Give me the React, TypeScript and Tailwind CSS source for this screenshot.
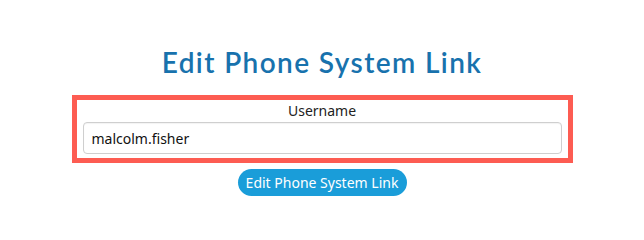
export default function App() {
  return (
    <div className="flex min-h-[219px] w-[644px] flex-col items-center bg-white font-['Noto_Sans',sans-serif]">
      {/* Title */}
      <h1 className="mt-[46px] h-[32px] font-['Lato',sans-serif] text-[28px] font-semibold leading-[32px] tracking-[1.4px] text-[#1872ad]">
        Edit Phone System Link
      </h1>

      {/* Highlighted field */}
      <div className="mt-[17px] w-[501px] border-[5px] border-[#fd5c52] px-[6px] pb-[4px]">
        <div className="h-[22px] text-center text-[14px] leading-[22px] text-[#222]">Username</div>
        <input
          type="text"
          defaultValue="malcolm.fisher"
          className="h-[32px] w-full rounded-[4px] border border-[#cfcfcf] px-[8px] text-[14px] text-[#111] shadow-[inset_0_1px_1px_rgba(0,0,0,0.05)] outline-none"
        />
      </div>

      {/* Action */}
      <button className="mt-[6px] h-[27px] w-[169px] rounded-full bg-[#1a9dd9] text-[14px] leading-[27px] text-white">
        Edit Phone System Link
      </button>
    </div>
  )
}
